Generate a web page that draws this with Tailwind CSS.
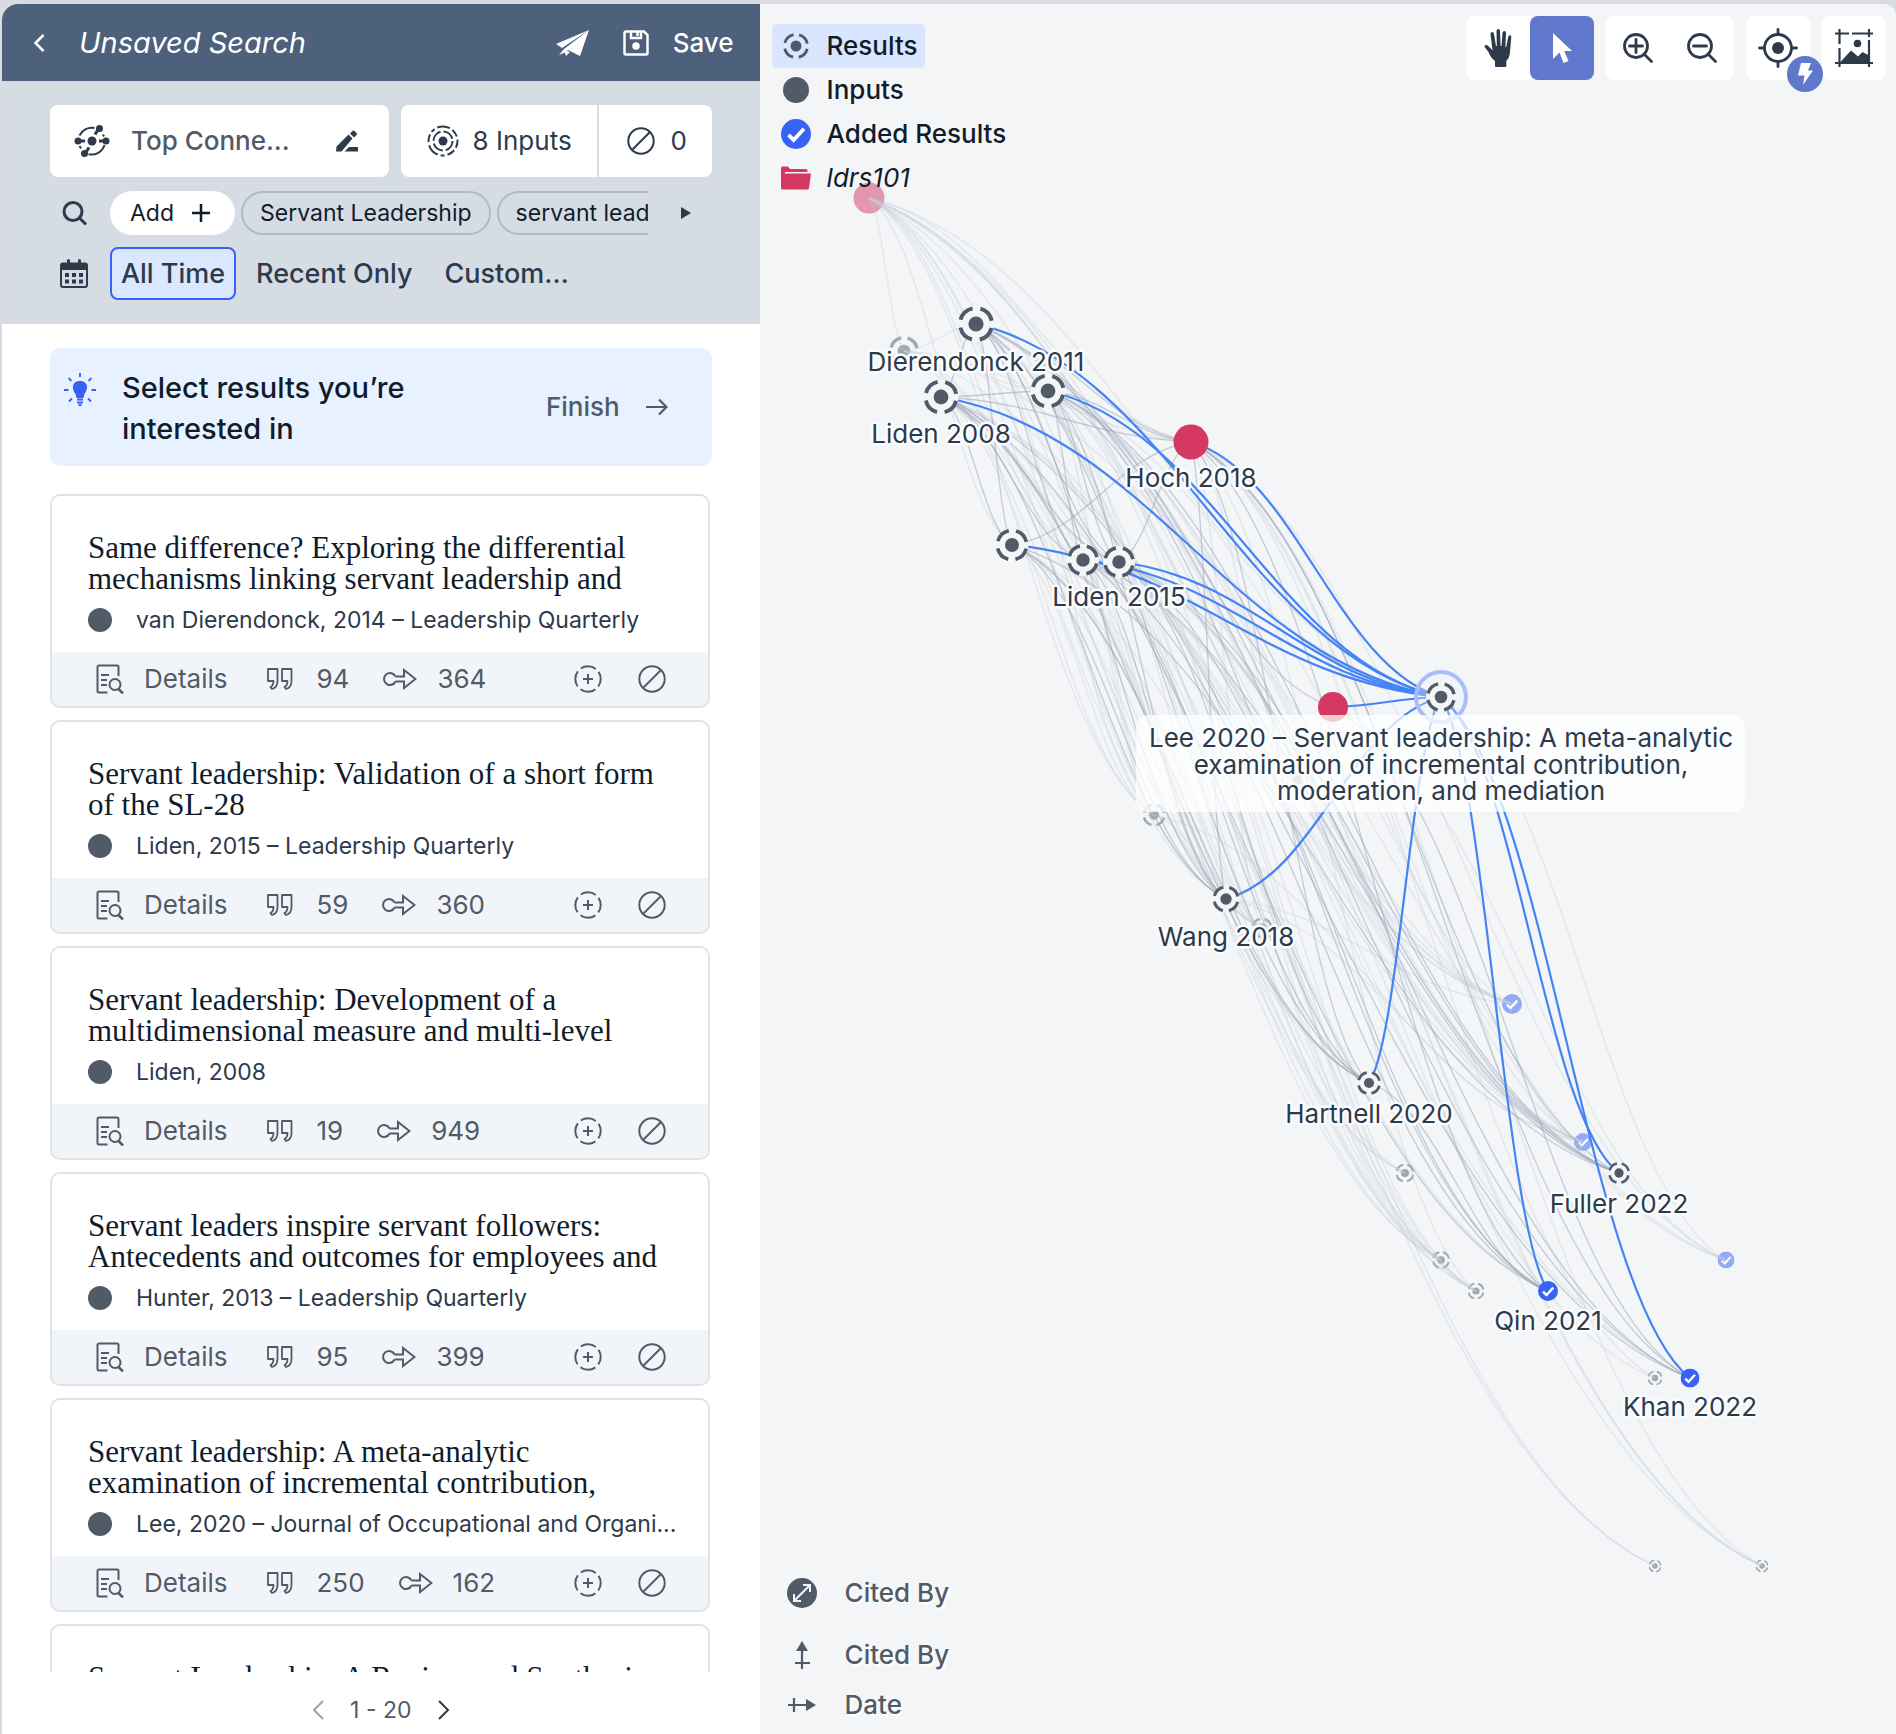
<!DOCTYPE html>
<html lang="en">
<head>
<meta charset="utf-8">
<title>Unsaved Search</title>
<script src="https://cdn.jsdelivr.net/npm/@tailwindcss/browser@4"></script>
</head>
<body class="h-screen overflow-hidden bg-[#d9dbe2] pt-1 pl-0.5 font-['Inter',sans-serif] text-[26px] leading-8 text-[#2d3a4b]">

<svg class="hidden" aria-hidden="true">
  <symbol id="ban" viewBox="0 0 28 28"><circle cx="14" cy="14" r="12.7" fill="none" stroke="currentColor" stroke-width="2"/><path d="M5.5 22.5 22.5 5.5" stroke="currentColor" stroke-width="2"/></symbol>
  <symbol id="doc" viewBox="0 0 28 30"><path d="M11.500 28.500H3a1.500 1.500 0 0 1-1.500-1.500V3A1.500 1.500 0 0 1 3 1.500h18A1.500 1.500 0 0 1 22.500 3v9M5 11h8M5 16h6M5 21h6" fill="none" stroke="currentColor" stroke-width="2"/><circle cx="19" cy="20.500" r="5.500" fill="none" stroke="currentColor" stroke-width="2"/><path d="m22.500 25 4.500 4.500" stroke="currentColor" stroke-width="2.500"/></symbol>
  <symbol id="quotes" viewBox="0 0 26 22"><path d="M1 1h9.500v12q0 6.500-5.500 8l-1.500-2q3-1.500 3-6H1zM15 1h9.500v12q0 6.500-5.500 8l-1.500-2q3-1.500 3-6H15z" fill="none" stroke="currentColor" stroke-width="1.800" stroke-linejoin="round"/></symbol>
  <symbol id="cites" viewBox="0 0 34 22"><path d="M12.500 8.500H21V2l11.500 9L21 20v-6.500h-8.500" fill="none" stroke="currentColor" stroke-width="2"/><path d="M12.500 8.500a6 6 0 1 0 0 5" fill="none" stroke="currentColor" stroke-width="2"/></symbol>
  <symbol id="add" viewBox="0 0 28 28"><circle cx="14" cy="14" r="12.700" fill="none" stroke="currentColor" stroke-width="2" stroke-dasharray="15.950 4" stroke-dashoffset="8"/><path d="M14 9v10M9 14h10" stroke="currentColor" stroke-width="2"/></symbol>
  <symbol id="target" viewBox="-18 -18 36 36"><circle r="7.600" fill="currentColor"/><circle r="16" fill="none" stroke="currentColor" stroke-width="4" stroke-dasharray="17.130 8" stroke-dashoffset="-4"/></symbol>
  <symbol id="check" viewBox="-16 -16 32 32"><circle r="16" fill="#3862f6"/><path d="m-8 1 5.500 5.500L8.500-5.500" fill="none" stroke="#fff" stroke-width="4"/></symbol>
</svg>

<div class="flex h-full">
  <aside class="flex h-full w-2/5 shrink-0 flex-col overflow-hidden rounded-tl-2xl bg-white">
    <header class="flex h-[77px] shrink-0 items-center bg-[#4d607c] pr-[26px] pl-[29px] text-white">
      <button aria-label="Back"><svg class="h-6 w-4" viewBox="0 0 16 24" fill="none" stroke="currentColor" stroke-width="2.500"><path d="m12.500 4-8 8 8 8"/></svg></button>
      <h1 class="ml-8 text-[29px] italic">Unsaved Search</h1>
      <button class="ml-auto" aria-label="Share"><svg class="h-7 w-[34px]" viewBox="0 0 34 28" fill="currentColor"><path d="M34 1 1 15l6 4zM34 1 9 20l-5 6 7-3zM34 1 13 21l12 6zM9 21l2 6 4-4z"/></svg></button>
      <button class="ml-[34px] flex items-center gap-6 font-medium"><svg class="size-[26px]" viewBox="0 0 26 26" fill="none" stroke="currentColor" stroke-width="2.500"><path d="M3.500 1.500h17.500l3.500 3.500v18a1.500 1.500 0 0 1-1.500 1.500H3a1.500 1.500 0 0 1-1.500-1.500V3a1.500 1.500 0 0 1 2-1.500zM8 2v6h10V2M14.500 2v4"/><circle cx="13" cy="16" r="3" fill="currentColor" stroke-width="1.500"/></svg>Save</button>
    </header>

    <section class="flex h-[243px] shrink-0 flex-col bg-[#d5dce4] px-12 pt-6">
      <div class="flex h-[72px] gap-3">
        <button class="flex flex-1 items-center rounded-lg bg-white pr-[30px] pl-6 font-medium text-[#515b68]">
          <svg class="h-8 w-9 text-[#2d3a4b]" viewBox="0 0 36 32" fill="currentColor"><g fill="none" stroke="currentColor" stroke-width="2"><path d="M5.500 10.500A13.500 13.500 0 0 1 20.500 3M29 9.500l1 2M30.500 20A13.500 13.500 0 0 1 14.500 29.200M7 23.500l-1.500-2.500"/><path d="M4 16h7M25 16h7M21 9.500l4-6.500M15 22.500 11 29" stroke-width="3"/></g><circle cx="18" cy="16" r="4.500"/><circle cx="4" cy="16" r="3.500"/><circle cx="32" cy="16" r="3.500"/><circle cx="25.500" cy="3.500" r="3.500"/><circle cx="10.500" cy="28.500" r="3.500"/></svg>
          <span class="ml-[21px]">Top Conne...</span>
          <svg class="ml-auto size-6 text-[#2d3a4b]" viewBox="0 0 24 24" fill="currentColor"><path d="M1 22.500 1.500 17.500 13.500 5.500l4 4L6.500 22.500zM15 4.500l2.500-2.500q1-1 2 0l2 2q1 1 0 2L19 8.500zM9.500 22.500l4.500-4.500H23v4.500z"/></svg>
        </button>
        <div class="flex overflow-hidden rounded-lg bg-white">
          <button class="flex w-[198px] items-center gap-3 border-r-2 border-[#d5dce4] pl-6">
            <svg class="size-9" viewBox="-18 -18 36 36" fill="none" stroke="currentColor" stroke-width="2"><circle r="4.500" fill="currentColor" stroke="none"/><circle r="9.500" stroke-dasharray="12 3"/><circle r="14.500" stroke-dasharray="13 3 8 3 4 3" stroke-dashoffset="6"/></svg>8 Inputs</button>
          <button class="flex w-[113px] items-center gap-4 pl-7"><svg class="size-7"><use href="#ban"/></svg>0</button>
        </div>
      </div>
      <div class="mt-3.5 flex h-11 items-center pl-2.5 text-[23px] text-[#111c2b]">
        <svg class="size-7 text-[#2d3a4b]" viewBox="0 0 28 28" fill="none" stroke="currentColor" stroke-width="3"><circle cx="13" cy="12.500" r="9"/><path d="m19.500 19 6.500 6.500"/></svg>
        <div class="ml-[22px] flex w-[538px] gap-1.5 overflow-hidden whitespace-nowrap">
          <button class="flex h-11 w-[125px] shrink-0 items-center gap-[18px] rounded-full bg-white pl-5">Add<svg class="size-[18px]" viewBox="0 0 18 18" stroke="currentColor" stroke-width="2.500"><path d="M9 0v18M0 9h18"/></svg></button>
          <button class="h-11 shrink-0 rounded-full border-2 border-[#aeb9ca] px-[17px]">Servant Leadership</button>
          <button class="h-11 shrink-0 rounded-full border-2 border-[#aeb9ca] px-[17px]">servant leadership</button>
        </div>
        <button class="ml-8" aria-label="More terms"><svg class="h-3.5 w-3 text-[#2d3a4b]" viewBox="0 0 12 14" fill="currentColor"><path d="m1 1 10 6-10 6z"/></svg></button>
      </div>
      <div class="mt-3 flex h-[53px] items-center pl-2.5 text-[27px] font-medium">
        <svg class="h-[30px] w-7" viewBox="0 0 28 30" fill="currentColor"><path d="M3 3.500h4V1.500a1.500 1.500 0 0 1 3 0v2h8v-2a1.500 1.500 0 0 1 3 0v2h4a3 3 0 0 1 3 3V26a3 3 0 0 1-3 3H3a3 3 0 0 1-3-3V6.500a3 3 0 0 1 3-3zM2 11v15q0 1 1 1h22q1 0 1-1V11z" fill-rule="evenodd"/><path d="M5 14h4v4H5zm7 0h4v4h-4zm7 0h4v4h-4zM5 20.500h4v4H5zm7 0h4v4h-4zm7 0h4v4h-4z"/></svg>
        <button class="ml-[22px] h-full w-[126px] rounded-lg border-2 border-[#3862f6] bg-[#dae8ff] whitespace-nowrap">All Time</button>
        <button class="ml-5">Recent Only</button>
        <button class="ml-8">Custom…</button>
      </div>
    </section>

    <main class="min-h-0 flex-1 overflow-hidden px-12 pt-6">
      <div class="flex h-[118px] rounded-[10px] bg-[#e7f1ff] pt-[19px] pr-11 pl-3 font-medium">
        <svg class="mt-1.5 size-9" viewBox="0 0 36 36" fill="#3862f6"><path d="M18 8c9 0 8 9 4.500 13l-1 4h-7l-1-4C10 17 9 8 18 8z"/><path d="M15 26.500h6M15 29.500h6M16.500 32h3M18 0v4M6.500 5l3 3M29.500 5l-3 3M2 17h4.500M29.500 17H34M7 28.500l3-3M29 28.500l-3-3" stroke="#3862f6" stroke-width="1.800"/></svg>
        <h2 class="ml-6 w-[340px] text-[29px] leading-[41px] text-[#111c2b]">Select results you’re interested in</h2>
        <button class="ml-auto flex h-20 items-center gap-[26px] text-[#515b68]">Finish<svg class="size-[22px]" viewBox="0 0 22 22" fill="none" stroke="currentColor" stroke-width="2.200"><path d="M0 11h20M13 3.500l7.500 7.500-7.500 7.500"/></svg></button>
      </div>
      <div id="results" class="mt-7 mr-0.5 flex flex-col gap-3"></div>
    </main>

    <nav class="flex h-[62px] shrink-0 items-center justify-center gap-[26px] pt-3.5 text-[23px]">
      <button aria-label="Previous page" class="text-[#9aa2ad]"><svg class="h-5 w-3" viewBox="0 0 12 20" fill="none" stroke="currentColor" stroke-width="2"><path d="m11 1-9 9 9 9"/></svg></button>
      <span class="text-[#515b68]">1 - 20</span>
      <button aria-label="Next page"><svg class="h-5 w-3" viewBox="0 0 12 20" fill="none" stroke="currentColor" stroke-width="2"><path d="m1 1 9 9-9 9"/></svg></button>
    </nav>
  </aside>

  <section class="relative flex min-w-0 flex-1 flex-col justify-between overflow-hidden rounded-tr-xl bg-[#f3f5f7]">
    <svg id="graph" class="absolute inset-0 h-full w-full" viewBox="760 4 1136 1730" preserveAspectRatio="xMinYMin meet" role="img" aria-label="Citation graph"></svg>

    <div class="relative flex items-start justify-between pt-3 pr-2.5">
      <ul class="mt-2 ml-3 flex flex-col font-medium text-[#111c2b] [text-shadow:2px_2px_0_#fff]">
        <li><button class="flex h-11 items-center gap-[18px] rounded-[5px] bg-[#dae5ff] pr-[7px] pl-[11px]"><svg class="size-[26px] text-[#515b68]"><use href="#target"/></svg>Results</button></li>
        <li><button class="flex h-11 items-center gap-[18px] pl-[11px]"><span class="size-[26px] rounded-full bg-[#515b68]"></span>Inputs</button></li>
        <li><button class="flex h-11 items-center gap-4 pl-[9px]"><svg class="size-[30px]"><use href="#check"/></svg>Added Results</button></li>
        <li><button class="flex h-11 items-center gap-4 pl-[9px] font-normal italic"><svg class="h-6 w-[30px]" viewBox="0 0 30 24" fill="#d63864"><path d="M0 2q0-1.500 1.500-1.500H7L9 3h16q1.500 0 1.500 1.500V6H4v1.500h26l-2 14.500q-.3 1.500-2 1.500H1.500Q0 23.500 0 22z"/></svg>ldrs101</button></li>
      </ul>
      <div class="flex gap-3 text-[#2d3a4b]">
        <div class="flex rounded-lg bg-white">
          <button class="grid size-16 place-items-center" aria-label="Pan"><svg class="h-[38px] w-7" viewBox="0 0 28 38" fill="currentColor"><path d="M11 37v-5Q6 28 4.500 23L.600 18Q0 16 2.500 16q2 .500 6 5.500L6.500 5q0-2 1.500-2t2 2l2 12h.800L12.500 2q0-2 1.700-2T16 2l.600 15h.900l1-13q.200-2 1.900-2t1.600 2l-.600 14h.800l2-10q.500-2 1.900-1.700T27.300 8l-1.500 17q-.500 4-3.500 7v5q0 1-1 1h-9.300q-1 0-1-1z"/></svg></button>
          <button class="grid size-16 place-items-center rounded-lg bg-[#5f78cb] text-white" aria-label="Select"><svg class="h-8 w-5" viewBox="0 0 20 32" fill="currentColor"><path d="M1 1v26l6.500-6.500L11.500 31l5-2-4.300-10H20z"/></svg></button>
        </div>
        <div class="flex rounded-lg bg-white">
          <button class="grid size-16 place-items-center" aria-label="Zoom in"><svg class="size-8" viewBox="0 0 32 32" fill="none" stroke="currentColor" stroke-width="2.800" stroke-linecap="round"><circle cx="14" cy="14" r="11.500"/><path d="m22 22 7.500 7.500M14 7.500v13M7.500 14h13"/></svg></button>
          <button class="grid size-16 place-items-center" aria-label="Zoom out"><svg class="size-8" viewBox="0 0 32 32" fill="none" stroke="currentColor" stroke-width="2.800" stroke-linecap="round"><circle cx="14" cy="14" r="11.500"/><path d="m22 22 7.500 7.500M7.500 14h13"/></svg></button>
        </div>
        <div class="relative rounded-lg bg-white">
          <button class="grid size-16 place-items-center" aria-label="Recenter"><svg class="size-10" viewBox="-20 -20 40 40" fill="none" stroke="currentColor" stroke-width="2.800" stroke-linecap="round"><circle r="13.500"/><circle r="6" fill="currentColor" stroke="none"/><path d="M0-18.500v4M0 14.500v4M-18.500 0h4M14.500 0h4"/></svg></button>
          <span class="absolute -right-[13px] -bottom-3 grid size-9 place-items-center rounded-full bg-[#5f78cb]"><svg class="h-[22px] w-4" viewBox="0 0 16 22" fill="#fff"><path d="M4 0h10l-3 7.500h5L6 22l1.500-9.500H1z"/></svg></span>
        </div>
        <button class="grid size-16 place-items-center rounded-lg bg-white" aria-label="Export image"><svg class="size-[38px]" viewBox="0 0 38 38" stroke="currentColor" stroke-width="2.200" fill="none"><path d="M0 4.500h14M17 4.500h21M4.500 0v15M4.500 19v19M34 0v8M34 11v27M0 34h38"/><circle cx="22.500" cy="14.500" r="3.800" fill="currentColor" stroke="none"/><path d="M4.500 34 16 21.500l7 6 4.500-4.500 6.500 3.500V34z" fill="currentColor" stroke="none"/></svg></button>
      </div>
    </div>

    <dl class="relative mb-2.5 ml-[27px] font-medium text-[#515b68] [text-shadow:2px_2px_0_#fff]">
      <div class="flex h-[62px] items-center gap-7"><dt class="size-[30px]"><svg class="size-[30px]" viewBox="0 0 30 30" fill="none" stroke="#f3f5f8" stroke-width="2"><circle cx="15" cy="15" r="15" fill="#515b68" stroke="none"/><path d="M8 22 22 8M16 7h7v7M7 16v7h7"/></svg></dt><dd>Cited By</dd></div>
      <div class="flex h-[62px] items-center gap-7"><dt class="size-[30px]"><svg class="size-[30px]" viewBox="0 0 30 30" fill="none" stroke="currentColor" stroke-width="2.200"><path d="M15 29V8M8 23h15"/><path d="m15 1 6 10H9z" fill="currentColor" stroke="none"/></svg></dt><dd>Cited By</dd></div>
      <div class="flex h-[38px] items-center gap-7"><dt class="size-[30px]"><svg class="size-[30px]" viewBox="0 0 30 30" fill="none" stroke="currentColor" stroke-width="2.200"><path d="M1 15h21M7 8v14"/><path d="m29 15-10 6V9z" fill="currentColor" stroke="none"/></svg></dt><dd>Date</dd></div>
    </dl>
  </section>
</div>

<script>
const results = [
  ['Same difference? Exploring the differential mechanisms linking servant leadership and', 'van Dierendonck, 2014 – Leadership Quarterly', 94, 364],
  ['Servant leadership: Validation of a short form<br>of the SL-28', 'Liden, 2015 – Leadership Quarterly', 59, 360],
  ['Servant leadership: Development of a multidimensional measure and multi-level', 'Liden, 2008', 19, 949],
  ['Servant leaders inspire servant followers: Antecedents and outcomes for employees and', 'Hunter, 2013 – Leadership Quarterly', 95, 399],
  ['Servant leadership: A meta-analytic examination of incremental contribution,', 'Lee, 2020 – Journal of Occupational and Organi...', 250, 162],
  ['Servant Leadership: A Review and Synthesis', 'van Dierendonck, 2011', 120, 800],
];
document.getElementById('results').innerHTML = results.map(([title, meta, refs, cites]) => `
  <article class="h-[214px] shrink-0 overflow-hidden rounded-[10px] border-2 border-[#e0e2e4] bg-white">
    <div class="h-[156px] px-9 pt-9">
      <h3 class="h-[62px] font-['Liberation_Serif',serif] text-[31px] leading-[31px] text-[#111c2b]">${title}</h3>
      <p class="mt-2.5 flex items-center gap-6 text-[23px] whitespace-nowrap"><span class="size-6 shrink-0 rounded-full bg-[#515b68]"></span>${meta}</p>
    </div>
    <div class="flex h-[54px] items-center bg-[#f1f5f9] pr-[42px] pl-11 text-[#515b68]">
      <button class="flex items-center gap-5"><svg class="h-[30px] w-7"><use href="#doc"/></svg>Details</button>
      <svg class="ml-10 h-[22px] w-[26px]"><use href="#quotes"/></svg><span class="ml-[23px]">${refs}</span>
      <svg class="ml-[34px] h-[22px] w-[34px]"><use href="#cites"/></svg><span class="ml-5">${cites}</span>
      <button class="ml-auto" aria-label="Add"><svg class="size-7"><use href="#add"/></svg></button>
      <button class="ml-9" aria-label="Exclude"><svg class="size-7"><use href="#ban"/></svg></button>
    </div>
  </article>`).join('');

// Nodes: x, y, radius, kind, label, label centre y
const nodes = {
  p1: [869, 198, 15.5, 'folder-dim'], f1: [904, 351, 15, 'result-dim'],
  d11: [976, 324, 18, 'result', 'Dierendonck 2011', 362],
  l08: [941, 397, 17.5, 'result', 'Liden 2008', 434],
  n3: [1048, 391, 17.5, 'result'],
  hoch: [1191, 442, 17.5, 'folder', 'Hoch 2018', 478],
  n4: [1012, 545, 16.5, 'result'], n5: [1083, 560, 16, 'result'],
  l15: [1119, 562, 16, 'result', 'Liden 2015', 597],
  p2: [1333, 707, 15, 'folder'], lee: [1441, 697, 15, 'result'],
  f2: [1297, 780, 12, 'result-dim'], f3: [1154, 815, 11.5, 'result-dim'],
  wang: [1226, 899, 13.5, 'result', 'Wang 2018', 937], f4: [1262, 928, 10.5, 'result-dim'],
  c1: [1512, 1004, 10, 'added-dim'],
  hart: [1369, 1083, 12, 'result', 'Hartnell 2020', 1114],
  c2: [1583, 1142, 9, 'added-dim'],
  full: [1619, 1173, 11, 'result', 'Fuller 2022', 1204],
  f5: [1405, 1173, 9.5, 'result-dim'], f6: [1441, 1260, 9, 'result-dim'], f7: [1476, 1291, 8.5, 'result-dim'],
  c3: [1726, 1260, 8.5, 'added-dim'],
  qin: [1548, 1291, 10, 'added', 'Qin 2021', 1321],
  f8: [1655, 1378, 7.5, 'result-dim'],
  khan: [1690, 1378, 9.5, 'added', 'Khan 2022', 1407],
  f9: [1655, 1566, 6.5, 'result-dim'], f10: [1762, 1566, 6.5, 'result-dim'],
};
const links = {
  dim: {
    p1: 'f1 n4 n5 l15 wang hart full qin khan c1 c2 hoch lee f3 f4',
    f1: 'd11 n3 hoch l15 wang hart lee c1',
    d11: 'f3 f4 f5 f6 f7 c1 c2 f10', l08: 'f3 f4 f5 f6 f7 c1 c2 f9',
    n3: 'f3 f4 f6 f7 c1 c2 c3 f10', hoch: 'f2 f4 f7 c1 c2 c3 f8 f10',
    n4: 'f3 f4 f5 f6 f7 f9', n5: 'f3 f6 f7 c1 c2 f8', l15: 'f4 f6 f7 c2 c3 f10',
    p2: 'f2 c3', f3: 'f4 c2', wang: 'c1 c2', lee: 'c3',
  },
  near: {
    d11: 'l08 n4 n5 l15 hoch wang hart full khan',
    l08: 'n3 hoch n4 n5 l15 wang hart qin khan',
    n3: 'hoch n5 l15 p2 wang full qin',
    hoch: 'n4 l15 wang hart full qin khan',
    n4: 'l15 wang hart full', n5: 'wang hart full qin', l15: 'hart full qin khan',
    p2: 'khan', hart: 'qin',
  },
  active: { lee: 'd11 l08 n3 hoch n4 n5 l15 p2 wang hart full qin khan' },
};
const strokes = {
  dim: 'stroke="#c3cbd8" stroke-opacity="0.3" stroke-width="1.6"',
  near: 'stroke="#9aa5b6" stroke-opacity="0.52" stroke-width="1.3"',
  active: 'stroke="#4584f4" stroke-width="2.2"',
};
// S-shaped link that leaves both ends close to horizontal
const curve = (a, b) => {
  const [x, y] = nodes[a], [u, v] = nodes[b], dx = u - x, dy = v - y;
  return `M${x} ${y}C${x + dx * .42} ${y + dy * .12} ${u - dx * .42} ${v - dy * .12} ${u} ${v}`;
};
const layer = kind => Object.entries(links[kind]).flatMap(([a, list]) => list.split(' ').map(b => `<path d="${curve(a, b)}" fill="none" ${strokes[kind]}/>`)).join('');
const draw = ([x, y, r, kind]) => {
  const box = `x="${x - r}" y="${y - r}" width="${2 * r}" height="${2 * r}"`;
  const dim = kind.endsWith('dim') ? ' opacity="0.5"' : '';
  if (kind.startsWith('folder')) return `<circle cx="${x}" cy="${y}" r="${r}" fill="#d63864"${dim}/>`;
  if (kind.startsWith('added')) return `<use href="#check" ${box}${dim}/>`;
  return `<circle cx="${x}" cy="${y}" r="${r}" fill="#f3f5f7"/><use href="#target" ${box} color="#515b68"${dim}/>`;
};
const all = Object.values(nodes);
const textStyle = 'text-anchor="middle" fill="#2d3a4b" stroke="#fbfcfd" stroke-width="5" stroke-linejoin="round" paint-order="stroke" font-size="26"';
document.getElementById('graph').innerHTML =
  all.filter(n => n[3].endsWith('dim')).map(draw).join('') +
  layer('dim') + layer('near') + layer('active') +
  '<circle cx="1441" cy="697" r="25" fill="#f3f5f8" fill-opacity="0.3" stroke="#a9bdfb" stroke-width="4"/>' +
  all.filter(n => !n[3].endsWith('dim')).map(draw).join('') +
  all.filter(n => n[4]).map(n => `<text x="${n[0]}" y="${n[5] + 9}" ${textStyle}>${n[4]}</text>`).join('') +
  '<rect x="1136" y="715" width="609" height="97" rx="11" fill="#fff" fill-opacity="0.74"/>' +
  `<text ${textStyle}><tspan x="1441" y="747">Lee 2020 – Servant leadership: A meta-analytic</tspan><tspan x="1441" y="774">examination of incremental contribution,</tspan><tspan x="1441" y="800">moderation, and mediation</tspan></text>`;
</script>
</body>
</html>
